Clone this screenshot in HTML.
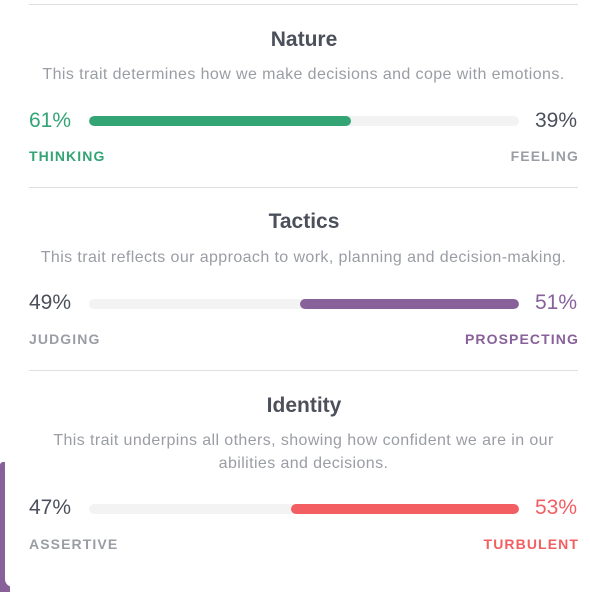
<!DOCTYPE html>
<html><head><style>
body{margin:0;width:590px;height:587px;background:#fff;position:relative;overflow:hidden;font-family:"Liberation Sans",sans-serif}
.strip{position:absolute;left:0;top:462px;width:10px;height:130px;background:#88619a;border-radius:3px 0 0 0}
.card{position:absolute;left:5px;top:0;width:600px;height:587px;background:#fff;border-radius:0 0 0 8px}
.line{position:absolute;left:29px;width:549px;height:1px;background:#dddfe2}
.t{position:absolute;left:0;width:608px;text-align:center;font-size:21px;font-weight:bold;color:#4b505b}
.d{position:absolute;left:29px;width:549px;text-align:center;font-size:16px;letter-spacing:0.4px;color:#9a9da3;line-height:23px}
.p{position:absolute;font-size:21px}
.l{position:absolute;font-size:14px;font-weight:bold;letter-spacing:1.1px}
.bar{position:absolute;left:89px;width:430px;height:10px;background:#f3f3f4;border-radius:5px;overflow:hidden}
.f{position:absolute;top:0;height:10px;border-radius:5px}
</style></head><body>
<div class="strip"></div><div class="card"></div>
<div class="line" style="top:4px"></div>
<div class="t" style="top:28px">Nature</div>
<div class="d" style="top:63px">This trait determines how we make decisions and cope with emotions.</div>
<div class="p" style="left:29px;top:109px;color:#33a474">61%</div>
<div class="p" style="left:535px;top:109px;color:#4b505b">39%</div>
<div class="bar" style="top:116px"><div class="f" style="left:0;width:262px;background:#33a474"></div></div>
<div class="l" style="left:29px;top:148px;color:#33a474">THINKING</div>
<div class="l" style="right:11px;top:148px;color:#9a9da3">FEELING</div>

<div class="line" style="top:187px"></div>
<div class="t" style="top:210px">Tactics</div>
<div class="d" style="top:246px">This trait reflects our approach to work, planning and decision-making.</div>
<div class="p" style="left:29px;top:291px;color:#4b505b">49%</div>
<div class="p" style="left:535px;top:291px;color:#88619a">51%</div>
<div class="bar" style="top:299px"><div class="f" style="left:211px;width:219px;background:#88619a"></div></div>
<div class="l" style="left:29px;top:331px;color:#9a9da3">JUDGING</div>
<div class="l" style="right:11px;top:331px;color:#88619a">PROSPECTING</div>

<div class="line" style="top:370px"></div>
<div class="t" style="top:394px">Identity</div>
<div class="d" style="top:429px">This trait underpins all others, showing how confident we are in our abilities and decisions.</div>
<div class="p" style="left:29px;top:496px;color:#4b505b">47%</div>
<div class="p" style="left:535px;top:496px;color:#f25e62">53%</div>
<div class="bar" style="top:504px"><div class="f" style="left:202px;width:228px;background:#f25e62"></div></div>
<div class="l" style="left:29px;top:536px;color:#9a9da3">ASSERTIVE</div>
<div class="l" style="right:11px;top:536px;color:#f25e62">TURBULENT</div>
</body></html>
